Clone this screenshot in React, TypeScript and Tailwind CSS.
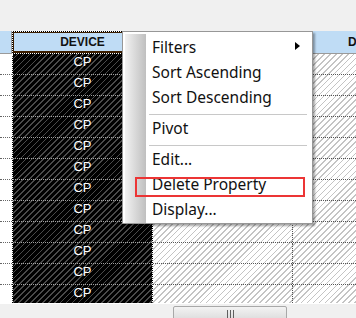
const rows = Array.from({ length: 12 }, (_, i) => i);

const darkHatch =
  "bg-[repeating-linear-gradient(135deg,#000_0px,#000_3px,#4a4a4a_3px,#4a4a4a_4.2px)]";
const lightHatch =
  "bg-[repeating-linear-gradient(135deg,#fff_0px,#fff_3px,#c4c4c4_3px,#c4c4c4_4.2px)]";

const MenuItem = ({ label, arrow }: { label: string; arrow?: boolean }) => (
  <div className="flex h-[25px] items-start justify-between pl-[6px] pr-[10px] leading-[22px]">
    <span>{label}</span>
    {arrow && (
      <span className="mt-[6px] h-0 w-0 border-y-[4.5px] border-l-[5px] border-y-transparent border-l-black" />
    )}
  </div>
);

const Separator = () => (
  <div className="flex h-[6px] items-center px-[3px]">
    <div className="h-px w-full bg-[#c8c8c8]" />
  </div>
);

const ContextMenu = () => (
  <div className="absolute left-[122px] top-[31px] flex w-[191px] border border-[#979797] bg-white p-[2px] pb-0 shadow-[2px_2px_2px_rgba(0,0,0,0.35)] font-['Noto_Sans',sans-serif] text-[15.5px] text-[#111]">
    <div className="w-[21px] shrink-0 bg-linear-to-r from-[#f2f2f2] to-[#bfbfbf]" />
    <div className="flex flex-1 flex-col pt-[2px]">
      <MenuItem label="Filters" arrow />
      <MenuItem label="Sort Ascending" />
      <MenuItem label="Sort Descending" />
      <Separator />
      <MenuItem label="Pivot" />
      <Separator />
      <MenuItem label="Edit..." />
      <MenuItem label="Delete Property" />
      <MenuItem label="Display..." />
    </div>
  </div>
);

export default function App() {
  return (
    <div className="relative flex h-[318px] w-[356px] flex-col overflow-hidden bg-[#f0f0f0] font-['Liberation_Sans',Arial,sans-serif]">
      <div className="h-[31px] shrink-0" />

      <div className="flex h-[272px] shrink-0 overflow-hidden">
        {/* row header strip */}
        <div className="flex w-[12px] shrink-0 flex-col bg-white">
          <div className="h-[23px] shrink-0 border-r border-b border-[#9a9a9a] bg-[#bfdcf5]" />
          {rows.map((r) => (
            <div key={r} className="h-[21px] shrink-0 border-b border-dotted border-[#666]" />
          ))}
        </div>

        {/* DEVICE column (selected) */}
        <div className="flex w-[141px] shrink-0 flex-col">
          <div className="h-[23px] shrink-0 border border-dotted border-white bg-black">
            <div className="flex h-full items-center justify-center border border-b-2 border-[#3c1e00] bg-[#bfdcf5] text-[12px] font-bold text-[#111]">
              DEVICE
            </div>
          </div>
          <div className={`flex flex-1 flex-col border-x border-dotted border-white ${darkHatch}`}>
            {rows.map((r) => (
              <div
                key={r}
                className="h-[21px] shrink-0 border-b border-dotted border-[#a0a0a0] text-center text-[13px] leading-[16px] text-white"
              >
                CP
              </div>
            ))}
          </div>
        </div>

        {/* remaining columns */}
        <div className="flex min-w-0 flex-1 flex-col">
          <div className="flex h-[23px] shrink-0 border-b border-[#9a9a9a] bg-[#bfdcf5]">
            <div className="w-[140px] shrink-0 border-r border-[#9a9a9a]" />
            <div className="flex items-center overflow-hidden pl-[55px] text-[12px] font-bold text-[#111]">
              D
            </div>
          </div>
          <div className={`flex flex-1 flex-col ${lightHatch}`}>
            {rows.map((r) => (
              <div key={r} className="flex h-[21px] shrink-0 border-b border-dotted border-[#555]">
                <div className="w-[140px] shrink-0 border-r border-dotted border-[#555]" />
              </div>
            ))}
          </div>
        </div>
      </div>

      {/* horizontal scrollbar */}
      <div className="relative h-[15px] shrink-0 border-t border-white bg-[#f0f0f0]">
        <div className="absolute left-[173px] top-[2px] flex h-[16px] w-[114px] justify-center gap-[2px] rounded-[2px] border border-[#a8a8a8] bg-linear-to-b from-[#f3f3f3] to-[#dadada] pt-[3px]">
          <div className="h-full w-px bg-[#5f5f5f]" />
          <div className="h-full w-px bg-[#5f5f5f]" />
          <div className="h-full w-px bg-[#5f5f5f]" />
        </div>
      </div>

      <ContextMenu />

      {/* highlight box */}
      <div className="absolute left-[135px] top-[177px] h-[20px] w-[170px] border-2 border-[#ec3535]" />
    </div>
  );
}
